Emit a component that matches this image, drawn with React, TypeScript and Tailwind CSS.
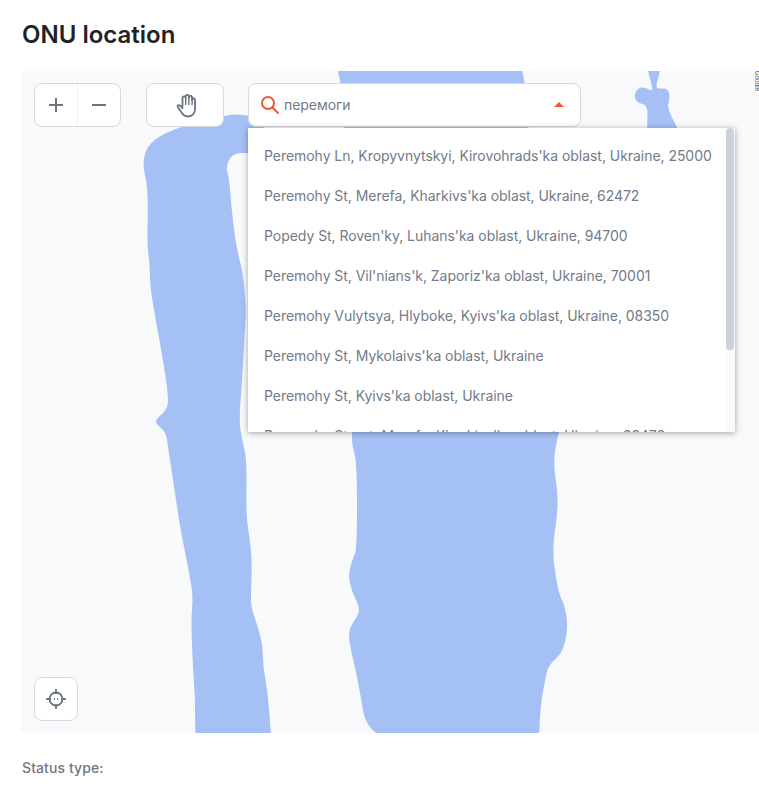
import React from "react";

const items = [
  "Peremohy Ln, Kropyvnytskyi, Kirovohrads'ka oblast, Ukraine, 25000",
  "Peremohy St, Merefa, Kharkivs'ka oblast, Ukraine, 62472",
  "Popedy St, Roven'ky, Luhans'ka oblast, Ukraine, 94700",
  "Peremohy St, Vil'nians'k, Zaporiz'ka oblast, Ukraine, 70001",
  "Peremohy Vulytsya, Hlyboke, Kyivs'ka oblast, Ukraine, 08350",
  "Peremohy St, Mykolaivs'ka oblast, Ukraine",
  "Peremohy St, Kyivs'ka oblast, Ukraine",
  "Peremohy Street, Merefa, Kharkivs'ka oblast, Ukraine, 62472",
];

type P = [number, number];

// Rounds a closed outline by running quadratic curves through edge midpoints.
function smooth(pts: P[]): string {
  const mid = (a: P, b: P): P => [(a[0] + b[0]) / 2, (a[1] + b[1]) / 2];
  const n = pts.length;
  const start = mid(pts[n - 1], pts[0]);
  let d = `M${start[0]} ${start[1]}`;
  for (let i = 0; i < n; i++) {
    const m = mid(pts[i], pts[(i + 1) % n]);
    d += ` Q${pts[i][0]} ${pts[i][1]} ${m[0]} ${m[1]}`;
  }
  return d + " Z";
}

const river1: P[] = [
  [222, 116], [236, 114], [248, 116], [265, 116], [265, 153], [247, 153], [237, 153], [230, 157], [226, 168],
  [229, 178], [230, 190], [233, 223], [237, 250], [243, 273], [246, 307], [245, 327], [242, 383], [239, 420],
  [242, 440], [247, 460], [246, 515], [250, 540], [252, 563], [251, 593], [251, 607], [258, 627], [263, 647],
  [263, 667], [267, 687], [270, 720], [272, 750], [196, 750], [195, 720], [195, 697], [193, 670], [191, 620],
  [193, 597], [190, 577], [180, 527], [175, 493], [168, 447], [166, 432], [156, 424], [156, 419], [168, 409],
  [168, 393], [163, 360], [157, 327], [150, 287], [150, 267], [147, 243], [148, 213], [147, 183], [143, 168],
  [145, 150], [157, 137], [182, 126], [205, 123], [218, 122],
];
const river2: P[] = [
  [335, 60], [335, 50], [522, 50], [522, 70], [525, 85], [527, 110], [529, 140], [560, 430], [558, 435], [553, 462],
  [558, 493], [557, 518], [552, 550], [558, 592], [565, 606], [568, 628], [563, 652], [549, 665], [546, 675],
  [540, 708], [539, 750], [370, 750], [357, 675], [351, 652], [348, 630], [357, 617], [360, 608], [352, 592],
  [348, 575], [353, 558], [357, 549], [357, 462], [352, 445], [352, 433], [345, 130], [341, 83],
];
const river3: P[] = [
  [648, 72], [647, 50], [661, 50], [660, 72], [657, 82], [656, 89], [668, 88], [670, 98], [667, 108], [677, 127], [685, 145],
  [647, 145], [647, 127], [648, 105], [637, 103], [634, 95], [638, 88], [645, 87], [653, 92], [651, 82],
];

export default function App() {
  return (
    <div className="h-[808px] w-[759px] overflow-hidden bg-white font-['Inter',sans-serif]">
      <h1 className="pl-[22px] pt-[19px] text-[24px] leading-[32px] font-semibold text-[#1f2328]">ONU location</h1>
      <div className="relative ml-[21px] mt-[20px] h-[662px] overflow-hidden rounded-l bg-[#f8f9fb]">
        <svg className="absolute inset-0 h-full w-full" viewBox="21 71 738 662">
          <path d={smooth(river1)} fill="#a5c0f5" />
          <path d={smooth(river2)} fill="#a5c0f5" />
          <path d={smooth(river3)} fill="#a5c0f5" />
        </svg>

        <div className="absolute right-0 top-0 h-[36px] w-[4px] overflow-hidden text-[6px] leading-[4px] text-[#555] [writing-mode:vertical-rl]">
          Google
        </div>

        <div className="absolute left-[13px] right-[23px] top-[12px] flex items-start">
          <div className="flex h-[44px] w-[87px] rounded-lg border border-[#d5d9e0] bg-white text-[#6b7280]">
            <div className="flex flex-1 items-center justify-center border-r border-[#f0f1f4]">
              <svg width="16" height="16" viewBox="0 0 16 16" fill="none" stroke="currentColor" strokeWidth="2">
                <path d="M8 1v14M1 8h14" />
              </svg>
            </div>
            <div className="flex flex-1 items-center justify-center">
              <svg width="16" height="16" viewBox="0 0 16 16" fill="none" stroke="currentColor" strokeWidth="2">
                <path d="M1 8h14" />
              </svg>
            </div>
          </div>

          <div className="ml-[25px] flex h-[44px] w-[78px] items-center justify-center rounded-lg border border-[#d5d9e0] bg-white pl-[2px] text-[#6b7280]">
            <svg width="21" height="26" viewBox="0 0 21 26" fill="none" stroke="currentColor" strokeWidth="1.800" strokeLinecap="round" strokeLinejoin="round">
              <path d="M6.500 14.500V6a1.600 1.600 0 0 1 3.200 0V4.500a1.600 1.600 0 0 1 3.200 0V5.500a1.600 1.600 0 0 1 3.200 0V8a1.500 1.500 0 0 1 3 0V17c0 4.500-3 7.500-7 7.500-3.500 0-5-1.500-6.500-4L1.800 15c-.8-1.500 1.200-2.500 2.400-1.300l2.300 2.300" />
              <path d="M9.700 6v6.500M12.900 4.500v8M16.100 5.500v7" strokeWidth="1.400" />
            </svg>
          </div>

          <div className="ml-[24px] flex h-[44px] w-[333px] items-center rounded-lg border border-[#d5d9e0] bg-white pl-[11px] pr-[16px]">
            <svg width="20" height="20" viewBox="0 0 20 20" fill="none" stroke="#f05a32" strokeWidth="2" strokeLinecap="round">
              <circle cx="8" cy="8" r="6" />
              <path d="M12.500 12.500L18 18" />
            </svg>
            <span className="mb-[1px] ml-[4px] flex-1 text-[14px] tracking-[-0.04px] text-[#737a8a]">перемоги</span>
            <div className="mb-[1px] h-0 w-0 border-x-[5px] border-b-[5px] border-x-transparent border-b-[#f05a32]" />
          </div>
        </div>

        <div className="absolute left-[227px] top-[57px] h-[304px] w-[487px] overflow-hidden bg-white shadow-[0_1px_6px_rgba(0,0,0,0.35)]">
          <div className="pl-[16px] pt-[7px]">
            {items.map((t) => (
              <div key={t} className="flex h-[40px] items-center whitespace-nowrap text-[14px] tracking-[-0.045px] text-[#737a8a]">
                {t}
              </div>
            ))}
          </div>
          <div className="absolute bottom-0 right-0 top-0 w-[9px] bg-[#f9fafb]">
            <div className="h-[222px] w-[8px] rounded bg-[#cdd2da]" />
          </div>
        </div>

        <div className="absolute bottom-[12px] left-[13px] flex h-[44px] w-[44px] items-center justify-center rounded-lg border border-[#d5d9e0] bg-white text-[#6b7280]">
          <svg width="20" height="20" viewBox="0 0 20 20" fill="none" stroke="currentColor" strokeWidth="1.800" strokeLinecap="round">
            <circle cx="10" cy="10" r="6.500" />
            <path d="M10 .8v3.500M10 15.700v3.500M.8 10h3.500M15.700 10h3.500" />
            <path d="M8.500 9.500v1M11.500 9.500v1" strokeWidth="1" />
          </svg>
        </div>
      </div>
      <div className="pl-[22px] pt-[25px] text-[14px] leading-[20px] font-medium tracking-[0.09px] text-[#6f7686]">Status type:</div>
    </div>
  );
}
